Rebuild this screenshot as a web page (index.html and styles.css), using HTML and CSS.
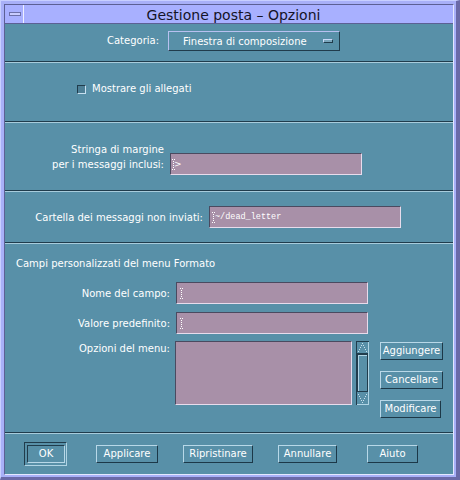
FILE: index.html
```html
<!DOCTYPE html>
<html lang="it">
<head>
<meta charset="utf-8">
<title>Gestione posta – Opzioni</title>
<link rel="stylesheet" href="styles.css">
</head>
<body>
<div class="window">
  <div class="panel">
    <div class="titlebar">
      <div class="menubtn"><span class="menubar"></span></div>
      <div class="title">Gestione posta – Opzioni</div>
    </div>
    <div class="content">
      <section class="sec sec-cat">
        <span class="lbl">Categoria:</span>
        <div class="dropdown"><span>Finestra di composizione</span><span class="ind"></span></div>
      </section>
      <div class="sep"></div>
      <section class="sec sec-chk">
        <span class="chk"></span><span class="lbl">Mostrare gli allegati</span>
      </section>
      <div class="sep"></div>
      <section class="sec sec-margin">
        <div class="lbl2">Stringa di margine<br>per i messaggi inclusi:</div>
        <div class="field f-margin">
          <svg class="ibeam" width="3" height="11" viewBox="0 0 3 11"><path fill="#fff" d="M0 0h1v1H0zM2 0h1v1H2zM1 2h1v1H1zM1 4h1v1H1zM1 6h1v1H1zM1 8h1v1H1zM0 10h1v1H0zM2 10h1v1H2z"/></svg><span class="gt">&gt;</span>
        </div>
      </section>
      <div class="sep"></div>
      <section class="sec sec-dead">
        <span class="lbl lbl-dead">Cartella dei messaggi non inviati:</span>
        <div class="field f-dead">
          <svg class="ibeam" width="3" height="11" viewBox="0 0 3 11"><path fill="#fff" d="M0 0h1v1H0zM2 0h1v1H2zM1 2h1v1H1zM1 4h1v1H1zM1 6h1v1H1zM1 8h1v1H1zM0 10h1v1H0zM2 10h1v1H2z"/></svg><span class="mono">~/dead_letter</span>
        </div>
      </section>
      <div class="sep"></div>
      <section class="sec sec-custom">
        <div class="heading">Campi personalizzati del menu Formato</div>
        <div class="form">
          <span class="flbl">Nome del campo:</span>
          <div class="field f-std">
            <svg class="ibeam" width="3" height="11" viewBox="0 0 3 11"><path fill="#fff" d="M0 0h1v1H0zM2 0h1v1H2zM1 2h1v1H1zM1 4h1v1H1zM1 6h1v1H1zM1 8h1v1H1zM0 10h1v1H0zM2 10h1v1H2z"/></svg>
          </div>
          <span class="flbl">Valore predefinito:</span>
          <div class="field f-std">
            <svg class="ibeam" width="3" height="11" viewBox="0 0 3 11"><path fill="#fff" d="M0 0h1v1H0zM2 0h1v1H2zM1 2h1v1H1zM1 4h1v1H1zM1 6h1v1H1zM1 8h1v1H1zM0 10h1v1H0zM2 10h1v1H2z"/></svg>
          </div>
          <span class="flbl flbl-top">Opzioni del menu:</span>
          <div class="listrow">
            <div class="list"></div>
            <svg class="scroll" width="13" height="64" viewBox="0 0 13 64">
              <rect width="13" height="64" fill="#5890a8"/>
              <path d="M0.5 0V64M0 0.5H13" stroke="#203c4c"/>
              <path d="M12.5 1V64M1 63.5H13" stroke="#b0d4e4"/>
              <path d="M1 12.5H12" stroke="#203c4c"/>
              <rect x="1.5" y="13.5" width="10" height="37" fill="none" stroke="#203c4c"/>
              <path d="M2 14.5H11M2.5 14V50" stroke="#b0d4e4"/>
              <path fill="#c8e0ec" d="M6 2h1v1H6zM5 4h1v1H5zM7 4h1v1H7zM4 6h1v1H4zM8 6h1v1H8zM3 8h1v1H3zM9 8h1v1H9zM2 10h1v1H2zM10 10h1v1h-1z"/>
              <path fill="#c8e0ec" d="M6 61h1v1H6zM5 59h1v1H5zM7 59h1v1H7zM4 57h1v1H4zM8 57h1v1H8zM3 55h1v1H3zM9 55h1v1H9zM2 53h1v1H2zM10 53h1v1h-1z"/>
            </svg>
            <div class="sidebtns">
              <span class="btn w63">Aggiungere</span>
              <span class="btn w63">Cancellare</span>
              <span class="btn w61">Modificare</span>
            </div>
          </div>
        </div>
      </section>
      <div class="sep"></div>
      <section class="sec sec-actions">
        <span class="okring"><span class="btn b-ok">OK</span></span>
        <span class="btn b-apply">Applicare</span>
        <span class="btn b-reset">Ripristinare</span>
        <span class="btn b-cancel">Annullare</span>
        <span class="btn b-help">Aiuto</span>
      </section>
    </div>
  </div>
</div>
</body>
</html>
```

FILE: styles.css
```css
* { box-sizing: border-box; margin: 0; padding: 0; }
body {
  margin: 0;
  background: #6a6aa8;
  font-family: "DejaVu Sans", "Liberation Sans", sans-serif;
  font-size: 10px;
  color: #ffffff;
}
.window {
  width: 460px;
  height: 480px;
  background: #a8b0f8;
  border-style: solid;
  border-width: 1px 4px 3px 1px;
  border-color: #c8d0ff #6a6aa8 #6a6aa8 #c8d0ff;
  padding: 3px 2px 2px 3px;
}
.panel {
  width: 450px;
  height: 471px;
  border: 1px solid;
  border-color: #5c6094 #e4e8ff #e4e8ff #5c6094;
  display: flex;
  flex-direction: column;
}
.titlebar {
  height: 19px;
  flex: none;
  border-bottom: 1px solid #5c6094;
  background: #a8b0ff;
  display: flex;
}
.menubtn {
  width: 19px;
  border-right: 1px solid #eef0ff;
  padding: 7px 0 0 4px;
}
.menubar {
  display: block;
  width: 12px;
  height: 4px;
  background: #c8ccff;
  border: 1px solid #6c70a8;
}
.title {
  flex: 1;
  text-align: center;
  font-size: 14px;
  line-height: 18px;
  padding: 1px 10px 0 0;
  color: #141428;
}
.content {
  flex: 1;
  background: #5890a8;
  display: flex;
  flex-direction: column;
}
.sep {
  flex: none;
  height: 2px;
  border-top: 1px solid #203c4c;
  border-bottom: 1px solid #a8ccdc;
}
.sec { flex: none; }
.lbl { line-height: 13px; white-space: nowrap; }

/* Categoria */
.sec-cat {
  height: 37px;
  display: flex;
  align-items: center;
  align-self: stretch;
  padding: 7px 0 0 102px;
  align-items: flex-start;
  gap: 9px;
}
.sec-cat .lbl { margin-top: 3px; }
.dropdown {
  width: 172px;
  height: 20px;
  border: 1px solid;
  border-color: #b8c0f0 #203c4c #203c4c #b8c0f0;
  display: flex;
  align-items: center;
  justify-content: space-between;
  padding: 0 6px 0 14px;
  line-height: 13px;
}
.ind {
  width: 10px;
  height: 4px;
  background: #7aa6bc;
  border: 1px solid;
  border-color: #c8d8f8 #203c4c #203c4c #c8d8f8;
}

/* Checkbox */
.sec-chk {
  height: 58px;
  display: flex;
  align-items: center;
  padding: 19px 0 0 72px;
  align-items: flex-start;
  gap: 6px;
}
.chk {
  width: 9px;
  height: 9px;
  margin-top: 3px;
  background: #4d7f96;
  border: 1px solid;
  border-color: #203c4c #c8e0f0 #c8e0f0 #203c4c;
}

/* Fields */
.field {
  width: 192px;
  height: 22px;
  background: #a890a8;
  border: 1px solid;
  border-color: #4a4a60 #e8dcec #e8dcec #4a4a60;
  display: flex;
  align-items: center;
}
.ibeam { display: block; flex: none; }

.sec-margin {
  height: 67px;
  display: flex;
  align-items: flex-start;
  padding-top: 19px;
  gap: 6px;
}
.lbl2 {
  width: 159px;
  text-align: right;
  line-height: 15px;
}
.f-margin { margin-top: 11px; padding-left: 1px; }
.gt { font-size: 9px; line-height: 11px; margin-left: -1px; }

.sec-dead {
  height: 50px;
  display: flex;
  align-items: center;
  padding-top: 0;
  gap: 6px;
}
.lbl-dead { width: 198px; text-align: right; }
.f-dead { padding-left: 2px; }
.mono {
  font-family: "Liberation Mono", "DejaVu Sans Mono", monospace;
  font-size: 8.5px;
  line-height: 11px;
}

/* Custom fields */
.sec-custom {
  height: 188px;
  padding-top: 13px;
}
.heading {
  padding-left: 11px;
  line-height: 13px;
}
.form {
  margin-top: 12px;
  display: grid;
  grid-template-columns: 165px auto;
  column-gap: 6px;
  row-gap: 8px;
  align-items: center;
  justify-items: start;
}
.flbl {
  justify-self: end;
  line-height: 13px;
  white-space: nowrap;
}
.f-std { padding-left: 3px; }
.flbl-top { align-self: start; padding-top: 1px; margin-top: -1px; }
.listrow {
  display: flex;
  align-items: flex-start;
  margin-top: -1px;
}
.list {
  width: 177px;
  height: 64px;
  margin-left: -1px;
  background: #a890a8;
  border: 1px solid;
  border-color: #4a4a60 #e8dcec #e8dcec #4a4a60;
}
.scroll { display: block; margin-left: 4px; }
.sidebtns {
  margin-left: 11px;
  padding-top: 1px;
  display: flex;
  flex-direction: column;
  align-items: flex-start;
  gap: 11px;
}
.btn {
  display: block;
  height: 18px;
  line-height: 16px;
  text-align: center;
  white-space: nowrap;
  border: 1px solid;
  border-color: #b8d8e8 #1c3848 #1c3848 #b8d8e8;
}
.w63 { width: 63px; }
.w61 { width: 61px; }

/* Actions */
.sec-actions {
  flex: 1;
  display: flex;
  align-items: center;
  padding: 0 0 0 19px;
}
.okring {
  display: block;
  width: 43px;
  height: 24px;
  padding: 2px 1px 2px 2px;
  border: 1px solid;
  border-color: #203c4c #b0d4e4 #b0d4e4 #203c4c;
}
.b-ok { width: 38px; border-color: #203c4c #b8d8e8 #b8d8e8 #203c4c; }
.b-apply { width: 62px; margin-left: 29px; }
.b-reset { width: 70px; margin-left: 25px; }
.b-cancel { width: 59px; margin-left: 25px; }
.b-help { width: 51px; margin-left: 30px; }
```
